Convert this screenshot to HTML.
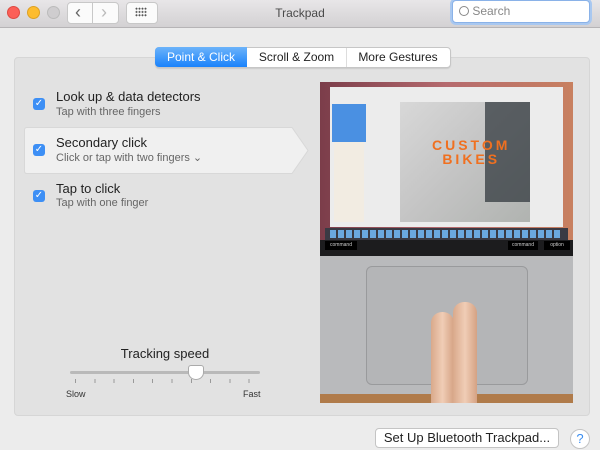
<!DOCTYPE html>
<html><head><style>
body{margin:0;width:600px;height:450px;background:#ececec;font-family:"Liberation Sans",sans-serif;position:relative;overflow:hidden}
.a{position:absolute}
.tb{left:0;top:0;width:600px;height:27px;background:linear-gradient(#e8e6e8,#d3d1d3);border-bottom:1px solid #b6b4b6}
.dot{width:12px;height:12px;border-radius:50%;top:6px}
.btn{background:#fbfbfb;border:1px solid #c8c8c8;border-radius:4px;height:20px;top:2px}
.chk{width:12px;height:12px;border-radius:3px;background:#3d8ff5;color:#fff;font-size:10px;line-height:12px;text-align:center}
.t1{font-size:13px;color:#222}
.t2{font-size:11px;color:#666}
.tab{top:48px;height:18px;line-height:18px;text-align:center;font-size:12px;color:#222;white-space:nowrap}
</style></head><body>
<div class="a tb"></div>
<div class="a dot" style="left:7px;background:#fc5f57;border:1px solid #de4a42;width:11px;height:11px"></div>
<div class="a dot" style="left:27px;background:#fdbc2e;border:1px solid #dea123;width:11px;height:11px"></div>
<div class="a dot" style="left:47px;background:#cfcdcf;border:1px solid #bbb;width:11px;height:11px"></div>
<div class="a btn" style="left:67px;width:50px"></div>
<div class="a" style="left:92px;top:3px;width:1px;height:20px;background:#c8c8c8"></div>
<div class="a" style="left:75px;top:2px;font-size:18px;color:#666">&#8249;</div>
<div class="a" style="left:101px;top:2px;font-size:18px;color:#bbb">&#8250;</div>
<div class="a btn" style="left:126px;width:30px"></div>
<div class="a" style="left:135px;top:7px;width:12px;height:10px;background:radial-gradient(circle,#555 0.8px,transparent 1.2px) 0 0/3px 3.3px"></div>
<div class="a" style="left:0;width:600px;top:6px;text-align:center;font-size:12px;color:#4a4a4a">Trackpad</div>
<div class="a" style="left:452px;top:0px;width:136px;height:21px;background:#fff;border:1px solid #8ab2e8;border-radius:4px;box-shadow:0 0 0 2px #a9c8f0"></div>
<div class="a" style="left:459px;top:4px;font-size:12px;color:#888"><span style="display:inline-block;width:8px;height:8px;border:1.4px solid #888;border-radius:50%;vertical-align:-1px"></span> Search</div>
<div class="a" style="left:14px;top:57px;width:574px;height:357px;background:#e2e2e2;border:1px solid #d6d6d6;border-radius:4px"></div>
<div class="a" style="left:155px;top:47px;width:294px;height:19px;background:#fff;border:1px solid #c6c6c6;border-radius:4px;box-shadow:0 1px 1px rgba(0,0,0,.1)"></div>
<div class="a tab" style="left:155px;top:47px;width:92px;height:20px;line-height:20px;background:linear-gradient(#6cb3fa,#1a82fb);color:#fff;border-radius:4px 0 0 4px">Point &amp; Click</div>
<div class="a tab" style="left:247px;width:99px">Scroll &amp; Zoom</div>
<div class="a" style="left:346px;top:48px;width:1px;height:19px;background:#ddd"></div>
<div class="a tab" style="left:347px;width:102px">More Gestures</div>
<svg class="a" style="left:24px;top:127px" width="285" height="48"><path d="M0.5 3 Q0.5 .5 3 .5 H268 L284 23.5 L268 46.5 H3 Q.5 46.5 .5 44 Z" fill="#f0f0f0" stroke="#d8d8d8"/></svg>
<div class="a chk" style="left:33px;top:98px">✓</div>
<div class="a t1" style="left:56px;top:89px">Look up &amp; data detectors</div>
<div class="a t2" style="left:56px;top:106px">Tap with three fingers</div>
<div class="a chk" style="left:33px;top:144px">✓</div>
<div class="a t1" style="left:56px;top:135px">Secondary click</div>
<div class="a t2" style="left:56px;top:151px">Click or tap with two fingers &#8964;</div>
<div class="a chk" style="left:33px;top:190px">✓</div>
<div class="a t1" style="left:56px;top:181px">Tap to click</div>
<div class="a t2" style="left:56px;top:197px">Tap with one finger</div>
<div class="a" style="left:0;width:330px;top:346px;text-align:center;font-size:13px;color:#222">Tracking speed</div>
<div class="a" style="left:70px;top:371px;width:190px;height:3px;background:#b9b9b9;border-radius:2px"></div>
<div class="a" style="left:188px;top:365px;width:14px;height:13px;background:#fff;border:1px solid #aaa;border-radius:3px 3px 50% 50%"></div>
<div class="a" style="left:75px;top:379px;width:185px;height:4px;background:repeating-linear-gradient(90deg,#999 0 1px,transparent 1px 19.3px)"></div>
<div class="a" style="left:66px;top:389px;font-size:9px;color:#333">Slow</div>
<div class="a" style="left:243px;top:389px;font-size:9px;color:#333">Fast</div>
<div class="a" style="left:320px;top:82px;width:253px;height:321px;background:#b5b6b8;overflow:hidden">
 <div class="a" style="left:0;top:0;width:253px;height:160px;background:linear-gradient(90deg,#7b3d4a,#b56a6e 50%,#c88060)"></div>
 <div class="a" style="left:10px;top:5px;width:233px;height:140px;background:#ececec"></div>
 <div class="a" style="left:12px;top:22px;width:34px;height:38px;background:#4a90e2"></div>
 <div class="a" style="left:14px;top:60px;width:30px;height:80px;background:#f2ece2"></div>
 <div class="a" style="left:80px;top:20px;width:130px;height:120px;background:linear-gradient(135deg,#d8d8d8,#c4c4c4 50%,#b0b3b0)"></div>
 <div class="a" style="left:165px;top:20px;width:45px;height:100px;background:#2a3036;opacity:.7"></div>
 <div class="a" style="left:112px;top:56px;font-size:14px;font-weight:bold;color:#f07020;letter-spacing:3px;line-height:14px;text-align:center">CUSTOM<br>BIKES</div>
 <div class="a" style="left:5px;top:146px;width:243px;height:13px;background:#3a3a44"></div>
 <div class="a" style="left:10px;top:148px;width:230px;height:8px;background:repeating-linear-gradient(90deg,#6aa8e0 0 6px,transparent 6px 8px)"></div>
 <div class="a" style="left:0;top:158px;width:253px;height:16px;background:#1c1c1e"></div>
 <div class="a" style="left:5px;top:159px;width:32px;height:9px;background:#000;color:#ccc;font-size:5px;text-align:center;line-height:9px">command</div>
 <div class="a" style="left:188px;top:159px;width:30px;height:9px;background:#000;color:#ccc;font-size:5px;text-align:center;line-height:9px">command</div>
 <div class="a" style="left:224px;top:159px;width:26px;height:9px;background:#000;color:#ccc;font-size:5px;text-align:center;line-height:9px">option</div>
 <div class="a" style="left:0;top:174px;width:253px;height:138px;background:#b9babc"></div>
 <div class="a" style="left:46px;top:184px;width:160px;height:117px;background:#b4b5b7;border:1px solid #999a9c;border-radius:6px"></div>
 <div class="a" style="left:0;top:312px;width:253px;height:9px;background:#b07b4a"></div>
 <div class="a" style="left:111px;top:230px;width:23px;height:95px;background:linear-gradient(90deg,#d9a98b,#f0cdb6,#d5a283);border-radius:11px 11px 0 0"></div>
 <div class="a" style="left:133px;top:220px;width:24px;height:105px;background:linear-gradient(90deg,#d9a98b,#f0cdb6,#d5a283);border-radius:11px 11px 0 0"></div>
</div>
<div class="a" style="left:375px;top:428px;width:182px;height:18px;background:#fff;border:1px solid #c4c4c4;border-radius:4px;text-align:center;font-size:13px;line-height:18px;color:#222">Set Up Bluetooth Trackpad...</div>
<div class="a" style="left:570px;top:429px;width:18px;height:18px;border-radius:50%;background:#fff;border:1px solid #c4c4c4;text-align:center;color:#3b8ef0;font-size:13px;line-height:18px">?</div>
</body></html>
